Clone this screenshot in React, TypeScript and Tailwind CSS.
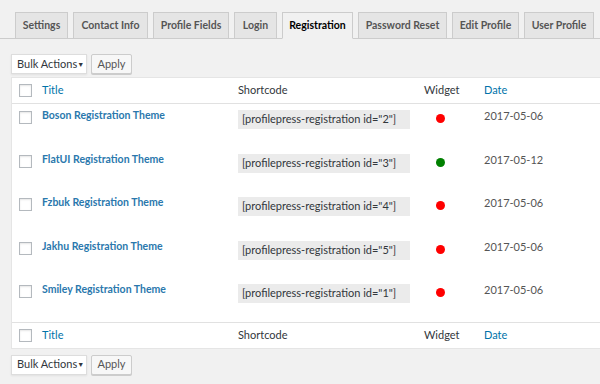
import React from "react";

const tabs: [string, number][] = [
  ["Settings", 53],
  ["Contact Info", 75],
  ["Profile Fields", 76],
  ["Login", 43],
  ["Registration", 71],
  ["Password Reset", 89],
  ["Edit Profile", 67],
  ["User Profile", 70],
];

const rows = [
  { title: "Boson Registration Theme", id: "2", ok: false, date: "2017-05-06" },
  { title: "FlatUI Registration Theme", id: "3", ok: true, date: "2017-05-12" },
  { title: "Fzbuk Registration Theme", id: "4", ok: false, date: "2017-05-06" },
  { title: "Jakhu Registration Theme", id: "5", ok: false, date: "2017-05-06" },
  { title: "Smiley Registration Theme", id: "1", ok: false, date: "2017-05-06" },
];

function Box() {
  return <div className="w-[13px] h-[13px] border border-[#b4b9be] bg-white shadow-[inset_0_1px_2px_rgba(0,0,0,0.1)]" />;
}

function Actions() {
  return (
    <div className="flex items-center gap-[4px] pl-[11px] whitespace-nowrap">
      <div className="w-[76px] h-[20px] bg-white border border-[#ddd] flex items-center justify-between pl-[5px] pr-[6px] text-[11px] text-[#32373c] shadow-[0_1px_2px_rgba(0,0,0,0.07)]">
        <span>Bulk Actions</span>
        <span className="text-[7px]">▼</span>
      </div>
      <div className="w-[41px] h-[20px] bg-[#f7f7f7] border border-[#ccc] rounded-[2px] flex items-center justify-center text-[11px] text-[#555] shadow-[0_1px_0_#ccc]">
        Apply
      </div>
    </div>
  );
}

function HeadRow({ top }: { top: boolean }) {
  return (
    <div className={`flex items-center h-[26px] ${top ? "border-b" : "border-t"} border-[#e1e1e1] text-[11px] whitespace-nowrap`}>
      <div className="w-[30px] pl-[7px] flex"><Box /></div>
      <div className="w-[196px] text-[#0073aa]">Title</div>
      <div className="w-[186px] text-[#32373c]">Shortcode</div>
      <div className="w-[60px] text-[#32373c]">Widget</div>
      <div className="text-[#0073aa]">Date</div>
    </div>
  );
}

export default function App() {
  return (
    <div className="w-[600px] h-[384px] bg-[#f1f1f1] overflow-hidden" style={{ fontFamily: 'Lato, "Liberation Sans", sans-serif' }}>
      <div className="pt-[12px] border-b border-[#ccc] flex gap-[5px] pl-[15px] h-[39px] whitespace-nowrap">
        {tabs.map(([t, w]) => {
          const active = t === "Registration";
          return (
            <div
              key={t}
              style={{ width: w }}
              className={`h-[27px] flex items-center justify-center border border-[#ccc] text-[10.5px] font-bold ${
                active ? "bg-[#f1f1f1] border-b-[#f1f1f1] text-black" : "bg-[#e5e5e5] text-[#555]"
              }`}
            >
              {t}
            </div>
          );
        })}
      </div>
      <div className="pt-[15px]">
        <Actions />
      </div>
      <div className="ml-[11px] mt-[3px] bg-white border border-[#e5e5e5] border-r-0">
        <HeadRow top />
        {rows.map((r) => (
          <div key={r.id} className="flex items-start h-[43.5px] pt-[4px] text-[11px] whitespace-nowrap">
            <div className="w-[30px] pl-[7px] pt-[3px] flex"><Box /></div>
            <div className="w-[196px] font-bold text-[10.5px] text-[#2a78ad]">{r.title}</div>
            <div className="w-[186px]">
              <div className="w-[172px] h-[19px] mt-[2px] bg-[#ebebeb] text-[#32373c] flex items-center pl-[4px]">
                [profilepress-registration id="{r.id}"]
              </div>
            </div>
            <div className="w-[60px] pl-[12px] pt-[6px]">
              <div className={`w-[9px] h-[9px] rounded-full ${r.ok ? "bg-[#008000]" : "bg-[#ff0000]"}`} />
            </div>
            <div className="text-[#555]">{r.date}</div>
          </div>
        ))}
        <HeadRow top={false} />
      </div>
      <div className="pt-[6px]">
        <Actions />
      </div>
    </div>
  );
}
